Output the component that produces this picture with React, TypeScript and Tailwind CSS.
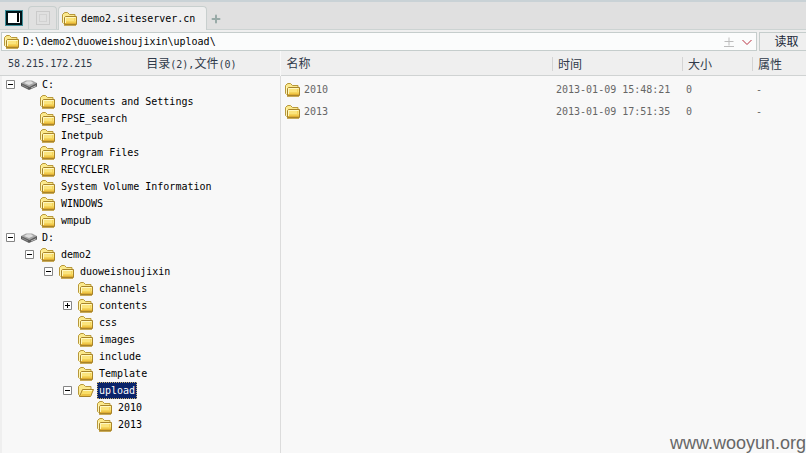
import { useState } from "react";
import { Plus } from "lucide-react";

type Node = {
    name: string;
    drive?: boolean;
    mark?: "+" | "-";
    children?: Node[];
};

const tree: Node[] = [
    {
        name: "C:",
        drive: true,
        mark: "-",
        children: [
            { name: "Documents and Settings" },
            { name: "FPSE_search" },
            { name: "Inetpub" },
            { name: "Program Files" },
            { name: "RECYCLER" },
            { name: "System Volume Information" },
            { name: "WINDOWS" },
            { name: "wmpub" },
        ],
    },
    {
        name: "D:",
        drive: true,
        mark: "-",
        children: [
            {
                name: "demo2",
                mark: "-",
                children: [
                    {
                        name: "duoweishoujixin",
                        mark: "-",
                        children: [
                            { name: "channels" },
                            { name: "contents", mark: "+" },
                            { name: "css" },
                            { name: "images" },
                            { name: "include" },
                            { name: "Template" },
                            {
                                name: "upload",
                                mark: "-",
                                children: [{ name: "2010" }, { name: "2013" }],
                            },
                        ],
                    },
                ],
            },
        ],
    },
];

const files = [
    { name: "2010", time: "2013-01-09 15:48:21", size: "0", attr: "-" },
    { name: "2013", time: "2013-01-09 17:51:35", size: "0", attr: "-" },
];

function Folder({ open }: { open?: boolean }) {
    return (
        <svg viewBox="0 0 16 14" className="block w-4 h-[14px] shrink-0" aria-hidden="true">
            <path d="M.5 10.5v-8l1.500-1.500 1-.5h2.500l2 2h5.500v9l-10.500 1z" fill="#fbe98c" stroke="#b8983a" />
            {open ? (
                <>
                    <path d="M1.500 12.500l3-7h11l-3 7z" fill="#fadf68" stroke="#a8842a" />
                    <path d="M5 6.500h9" stroke="#fff8c0" />
                    <path d="M3.500 10.500h9M3 11.500h9.500" stroke="#ecc345" />
                </>
            ) : (
                <>
                    <path d="M1.500 11.500v-8" stroke="#fff6b8" />
                    <path d="M3.500 4.500h11v8h-12v-7z" fill="#fbe47c" stroke="#a8842a" />
                    <path d="M3.500 12v-6.500h10" fill="none" stroke="#fff8c0" />
                    <path d="M4 9.500h10M12.500 6v6" stroke="#f5d45c" />
                    <path d="M4 10.500h10" stroke="#f0c94a" />
                    <path d="M3 11.500h11" stroke="#dfae34" />
                    <path d="M2 13.500h12" stroke="#c9aa58" />
                </>
            )}
        </svg>
    );
}

function Drive() {
    return (
        <svg viewBox="0 0 16 10" className="block w-4 h-[10px] shrink-0" aria-hidden="true">
            <path d="M0 3v3l8 4 8-3.500V3z" fill="#5c5c5c" />
            <path d="M0 3l5-2.500h6L16 3 8.500 7z" fill="#a4a4a4" />
            <path d="M3 3l3-1.800h4L12.500 3 8 5z" fill="#dedede" />
            <path d="M1 5l6 3" stroke="#8c8c8c" />
            <path d="M10 8l5-2.200" stroke="#bcbcbc" />
        </svg>
    );
}

function TreeItem({ node, selected, onSelect }: { node: Node; selected: string; onSelect: (name: string) => void }) {
    const [open, setOpen] = useState(node.mark === "-");
    const isSelected = selected === node.name;

    return (
        <li>
            <div className="flex items-center h-[17px]">
                {node.mark ? (
                    <button
                        type="button"
                        aria-label={(open ? "Collapse " : "Expand ") + node.name}
                        onClick={() => setOpen(!open)}
                        className="w-[9px] h-[9px] shrink-0 bg-white"
                    >
                        <svg viewBox="0 0 9 9" className="block w-[9px] h-[9px]">
                            <path d="M.5.5h8v8h-8z" fill="#fff" stroke="#858585" />
                            <path d={open ? "M2 4.500h5" : "M2 4.500h5M4.500 2v5"} stroke="#000" />
                        </svg>
                    </button>
                ) : (
                    <span className="w-[9px] shrink-0"></span>
                )}
                <span className="ml-[6px] mr-[3px]">
                    {node.drive ? <Drive /> : <Folder open={isSelected} />}
                </span>
                <button
                    type="button"
                    onClick={() => onSelect(node.name)}
                    className={
                        isSelected
                            ? "h-[17px] px-px border border-dotted border-[#c8b070] bg-[#0a246a] text-white whitespace-nowrap"
                            : "h-[17px] px-[2px] text-black whitespace-nowrap"
                    }
                >
                    {node.name}
                </button>
            </div>
            {open && node.children && (
                <ul className="pl-[19px]">
                    {node.children.map((child) => (
                        <TreeItem key={child.name} node={child} selected={selected} onSelect={onSelect} />
                    ))}
                </ul>
            )}
        </li>
    );
}

function Cjk({ children }: { children: string }) {
    return <span className="text-[12px] font-['Noto_Sans_CJK_SC',sans-serif]">{children}</span>;
}

function App() {
    const [selected, setSelected] = useState("upload");
    const [path, setPath] = useState("D:\\demo2\\duoweishoujixin\\upload\\");

    return (
        <div className="relative flex flex-col min-h-screen overflow-hidden bg-[#efefef] font-['DejaVu_Sans_Mono','Noto_Sans_CJK_SC',monospace] text-[10px] leading-4 text-black">
            <div className="flex items-end h-[30px] border-t-2 border-b border-t-[#c9d2d6] border-b-[#ccd3d2] bg-[#e0e0e0]">
                <button type="button" aria-label="Home" className="ml-[5px] mb-[3px]">
                    <svg viewBox="0 0 18 16" className="block w-[18px] h-4">
                        <path d="M0 0h18v16H0z" fill="#3d8f9a" />
                        <path d="M1 1h16v14H1z" fill="#001318" />
                        <path d="M3 3h12v10H3z" fill="#fff" />
                        <path d="M12 3h2v9h-2z" fill="#000" />
                    </svg>
                </button>
                <button
                    type="button"
                    aria-label="Empty tab"
                    className="flex items-center justify-center w-[29px] h-[23px] ml-[5px] rounded-t border border-b-0 border-[#c8cfce]"
                >
                    <svg viewBox="0 0 14 14" className="w-[14px] h-[14px]" fill="none" stroke="#b4b4b4">
                        <path d="M.5.5h13v13H.5z" strokeDasharray="1 1" />
                        <path d="M3.500 3.500h7v7h-7z" stroke="#c4c4c4" strokeDasharray="1 1" />
                    </svg>
                </button>
                <button
                    type="button"
                    className="flex items-center h-6 ml-[1px] pl-[3px] pr-[11px] -mb-px rounded-t-sm border border-b-0 border-[#c8cfce] bg-[#efefef]"
                >
                    <Folder />
                    <span className="ml-[3px]">demo2.siteserver.cn</span>
                </button>
                <button type="button" aria-label="New tab" className="ml-[3px] mb-[4px]">
                    <Plus className="w-3 h-3 text-[#98aaa7]" strokeWidth={4} />
                </button>
            </div>

            <div className="flex h-[21px] pt-[2px] pl-px gap-[2px]">
                <div className="flex flex-1 items-center min-w-0 pl-[2px] pr-[4px] border border-[#c5cdcc] bg-[#fbfcfc]">
                    <Folder />
                    <input
                        aria-label="Path"
                        value={path}
                        onChange={(e) => setPath(e.target.value)}
                        className="flex-1 min-w-0 h-4 ml-[3px] bg-transparent focus:outline-none"
                    />
                    <button type="button" aria-label="Bookmark" className="mr-2">
                        <svg viewBox="0 0 10 10" className="block w-[10px] h-[10px]" stroke="#bcbcbc">
                            <path d="M.5 4.500h9M5 .5v8M0 9.500h10" />
                        </svg>
                    </button>
                    <button type="button" aria-label="History">
                        <svg viewBox="0 0 10 10" className="block w-[10px] h-[10px]" fill="none" stroke="#b83040">
                            <path d="M.5 3l4.500 4.500L9.500 3" />
                        </svg>
                    </button>
                </div>
                <button
                    type="button"
                    className="w-[47px] pl-[7px] border border-r-0 border-[#c5cdcc] text-[#202838] leading-4"
                >
                    <Cjk>读取</Cjk>
                </button>
            </div>

            <div className="flex flex-1">
                <aside className="flex flex-col w-[280px] shrink-0">
                    <div className="flex items-center gap-[54px] h-[25px] pt-[2px] pl-2 border-b border-[#d0d3d3] text-[#303a4a]">
                        <span>58.215.172.215</span>
                        <span>
                            <Cjk>目录</Cjk>(2),<Cjk>文件</Cjk>(0)
                        </span>
                    </div>
                    <ul className="flex-1 ml-[2px] pl-[4px] bg-[#f8f8f8]">
                        {tree.map((node) => (
                            <TreeItem key={node.name} node={node} selected={selected} onSelect={setSelected} />
                        ))}
                    </ul>
                </aside>

                <main className="flex flex-col flex-1 min-w-0 bg-[#f8f8f8]">
                    <table className="w-full table-fixed border-collapse text-left text-[#666]">
                        <thead>
                            <tr className="h-[25px] bg-[#efefef] shadow-[inset_0_-1px_0_#d0d3d3] text-[#303a4a]">
                                <th className="p-0 pl-[6px] font-normal">
                                    <Cjk>名称</Cjk>
                                </th>
                                <th className="w-[130px] p-0 font-normal">
                                    <div className="h-[14px] leading-[14px] pl-[5px] border-l border-[#d4d4d4]">
                                        <Cjk>时间</Cjk>
                                    </div>
                                </th>
                                <th className="w-[70px] p-0 font-normal">
                                    <div className="h-[14px] leading-[14px] pl-[5px] border-l border-[#d4d4d4]">
                                        <Cjk>大小</Cjk>
                                    </div>
                                </th>
                                <th className="w-[54px] p-0 font-normal">
                                    <div className="h-[14px] leading-[14px] pl-[5px] border-l border-[#d4d4d4]">
                                        <Cjk>属性</Cjk>
                                    </div>
                                </th>
                            </tr>
                        </thead>
                        <tbody>
                            {files.map((file) => (
                                <tr key={file.name} className="h-[22px]">
                                    <td className="p-0 pt-[5px] pl-1 border-l border-[#dcdcdc]">
                                        <div className="flex items-center gap-[3px]">
                                            <Folder />
                                            <span>{file.name}</span>
                                        </div>
                                    </td>
                                    <td className="p-0 pt-[5px] pl-1">{file.time}</td>
                                    <td className="p-0 pt-[5px] pl-1">{file.size}</td>
                                    <td className="p-0 pt-[5px] pl-1">{file.attr}</td>
                                </tr>
                            ))}
                        </tbody>
                    </table>
                    <div className="flex-1 border-l border-[#dcdcdc]"></div>
                </main>
            </div>

            <div className="absolute right-0 bottom-0 text-[18px] leading-5 text-[#666] font-['Liberation_Sans',sans-serif]">
                www.wooyun.org
            </div>
        </div>
    );
}

export default App;
